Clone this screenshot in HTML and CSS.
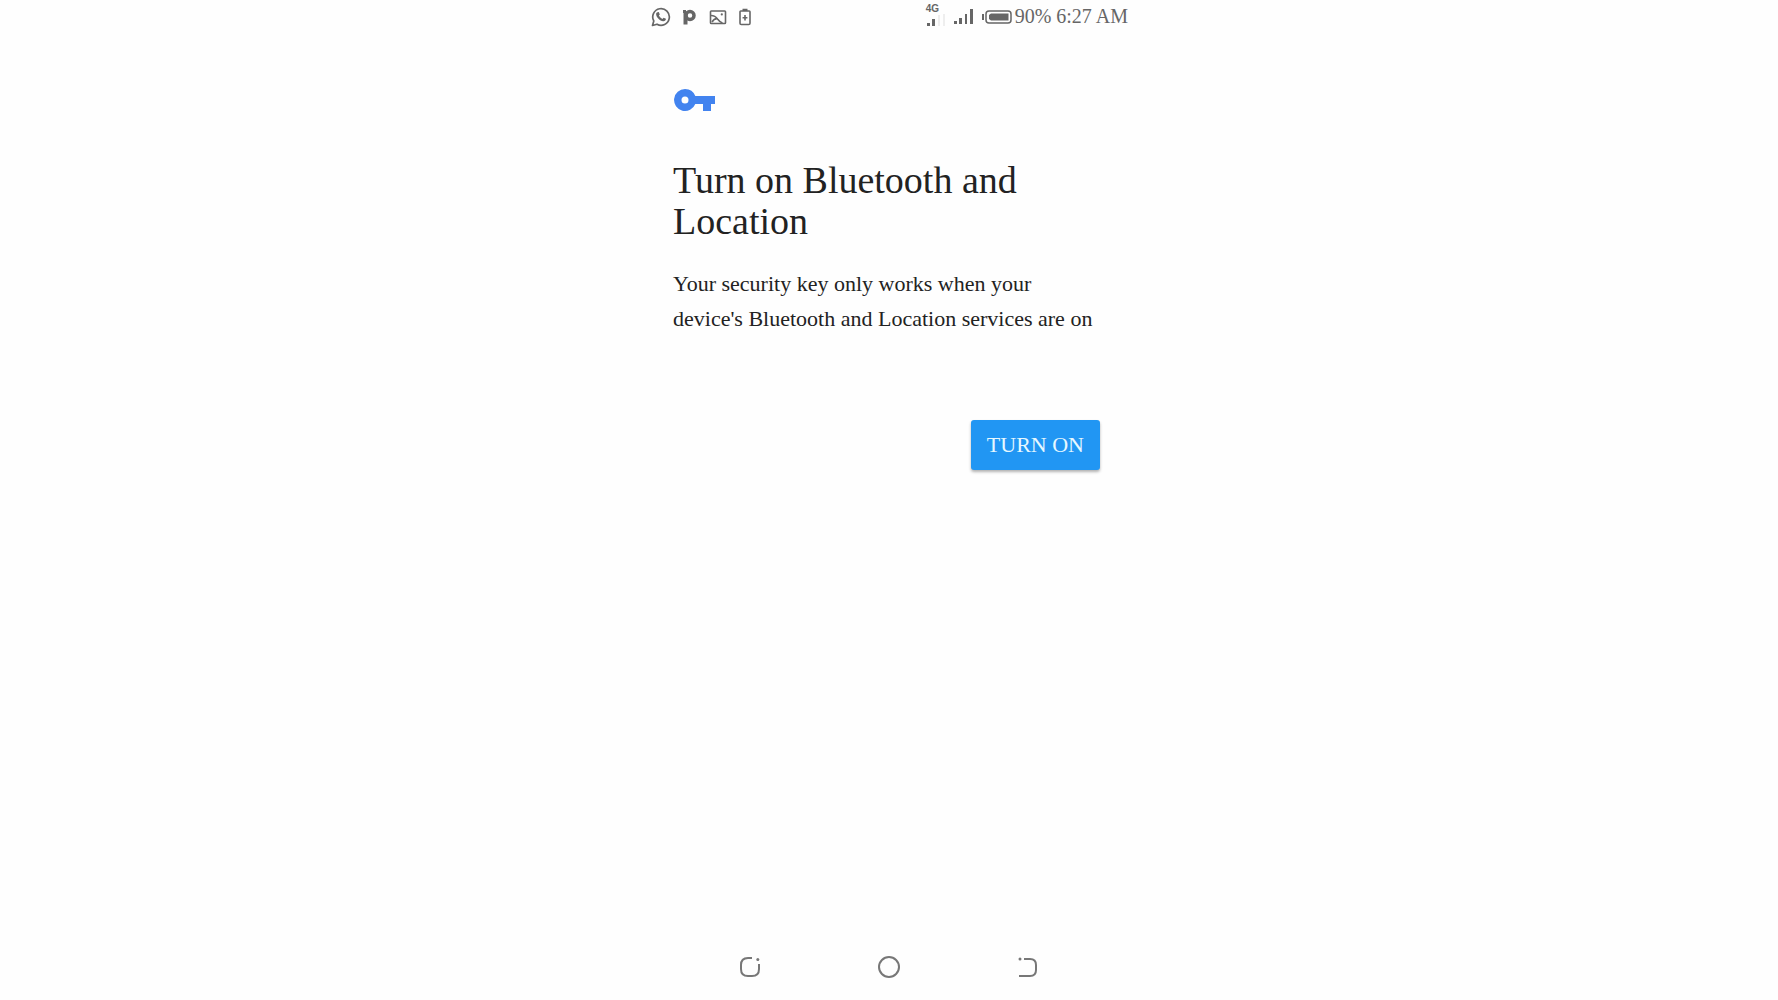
FILE: index.html
```html
<!DOCTYPE html>
<html lang="en">
<head>
<meta charset="utf-8">
<meta name="viewport" content="width=device-width, initial-scale=1">
<title>Turn on Bluetooth and Location</title>
<link rel="stylesheet" href="styles.css">
</head>
<body>
<div class="phone">
  <header class="status">
    <div class="notifications">
      <svg width="20" height="20" viewBox="0 0 20 20" fill="none" stroke="currentColor" aria-label="WhatsApp"><path d="M1.500 18.500 2.800 14a8.300 8.300 0 1 1 3.200 3.200Z" stroke-width="1.700" stroke-linejoin="round"/><path d="M6.500 5.200 7.800 5l1 2.400-.9 1.200c.8 1.500 2 2.600 3.500 3.300l1.200-1.200 2.300 1.100c.1 1.500-1.100 2.600-2.700 2.500-3.400-.4-6.800-3.700-7.100-7-.1-.9.500-1.700 1.400-2.100Z" fill="currentColor" stroke="none"/></svg>
      <svg width="16" height="20" viewBox="0 0 16 20" fill="none" stroke="currentColor" aria-label="P"><path d="M3.500 17.500V4.500" stroke-width="4"/><path d="M1 4.500h3" stroke-width="3"/><circle cx="8" cy="8.500" r="4" stroke-width="3.500"/></svg>
      <svg width="18" height="20" viewBox="0 0 18 20" fill="none" stroke="currentColor" stroke-width="1.600" aria-label="Image"><rect x="1.500" y="4" width="15" height="12.500" rx=".8"/><path d="M2 8.500c4 0 5.200 1.500 6.500 3.500 1.500 2 3 3.500 5 4M3 15c1.500-2.600 3-3.600 5.200-3.400"/><circle cx="12.800" cy="7.400" r="1.100" fill="currentColor" stroke="none"/></svg>
      <svg width="14" height="20" viewBox="0 0 14 20" fill="none" stroke="currentColor" stroke-width="1.600" aria-label="Battery saver"><path d="M2 4.800Q2 4 2.800 4h8.400q.8 0 .8.800v11.400q0 1.300-1.300 1.300H3.300Q2 17.500 2 16.200ZM4.500 2.500h5M7 8v5.500M4.600 10.700h4.800"/></svg>
    </div>
    <div class="system">
      <div class="network"><span class="network-label">4G</span>
        <svg width="20" height="16" viewBox="0 0 20 16"><path fill="currentColor" d="M1 9h3v3H1ZM6 5h3v7H6Z"/><path fill="#eee" d="M12 1h2v11h-2ZM17 0h2v12h-2Z"/></svg>
      </div>
      <svg class="signal" width="22" height="18" viewBox="0 0 22 18" fill="currentColor" aria-label="Signal"><path d="M1 13h3v3H1ZM6 10h3v6H6ZM12 6h2v10h-2ZM17 1h3v15h-3Z"/></svg>
      <svg class="battery" width="30" height="16" viewBox="0 0 30 16" fill="none" stroke="currentColor" aria-label="Battery"><path d="M1 5v6" stroke-width="2"/><rect x="4" y="2" width="25" height="12" rx="3" stroke-width="1.500"/><path fill="currentColor" stroke="none" d="M9 4.500h17.500v7H9L7 10V6Z"/></svg>
      <span class="readings">90% <time>6:27 AM</time></span>
    </div>
  </header>
  <main class="content">
    <svg class="key" width="42" height="24" viewBox="0 0 42 24" aria-hidden="true"><path fill="#4283ef" fill-rule="evenodd" d="M12 1a11 11 0 1 0 10.300 15H30v7h8v-7h4V8H22.300A11 11 0 0 0 12 1Zm0 7.500a3.500 3.500 0 1 1 0 7 3.500 3.500 0 0 1 0-7Z"/></svg>
    <h1 class="title">Turn on Bluetooth and Location</h1>
    <p class="message">Your security key only works when your<br>device's Bluetooth and Location services are on</p>
    <button class="turn-on" type="button">TURN ON</button>
  </main>
  <nav class="navigation" aria-label="System navigation">
    <button class="nav-button" type="button" aria-label="Recent apps"><svg width="24" height="24" viewBox="0 0 24 24" fill="none" stroke="currentColor" stroke-width="2"><path d="M14 3H10Q3 3 3 10v4q0 7 7 7h4q7 0 7-7V9"/><circle cx="19.800" cy="4.500" r="1.500" fill="currentColor" stroke="none"/></svg></button>
    <button class="nav-button" type="button" aria-label="Home"><svg width="24" height="24" viewBox="0 0 24 24" fill="none" stroke="currentColor" stroke-width="2"><circle cx="12" cy="12" r="10"/></svg></button>
    <button class="nav-button" type="button" aria-label="Back"><svg width="24" height="24" viewBox="0 0 24 24" fill="none" stroke="currentColor" stroke-width="2"><path d="M8 4h6q6 0 6 6v5q0 6-6 6H3"/><circle cx="4" cy="4" r="1.500" fill="currentColor" stroke="none"/></svg></button>
  </nav>
</div>
</body>
</html>
```
FILE: styles.css
```css
* {
  box-sizing: border-box;
}

body {
  margin: 0;
  background: #fefefe;
  color: #222;
  font-family: "Liberation Serif", "Times New Roman", serif;
}

svg {
  display: block;
  flex: none;
}

.phone {
  display: flex;
  flex-direction: column;
  width: 100%;
  max-width: 500px;
  min-height: 100vh;
  margin: 0 auto;
}

.status {
  display: flex;
  justify-content: space-between;
  align-items: center;
  height: 33px;
  padding: 0 11px 0 12px;
  color: #666;
  font-size: 20px;
}

.notifications {
  display: flex;
  align-items: center;
  gap: 11px;
}

.system {
  display: flex;
  align-items: center;
  gap: 3px;
  white-space: nowrap;
}

.network {
  display: flex;
  flex-direction: column;
}

.network-label {
  font: bold 10px/10px "Liberation Sans", Arial, sans-serif;
}

.signal {
  margin: 0 4px;
}

.content {
  display: flex;
  flex: 1;
  flex-direction: column;
  padding: 55px 32px 40px 34px;
}

.title {
  margin: 48px 0 24px;
  font-size: 38px;
  font-weight: 400;
  line-height: 41px;
}

.message {
  margin: 0;
  font-size: 22px;
  line-height: 35px;
}

.turn-on {
  align-self: flex-end;
  height: 50px;
  margin: 84px 7px 0 0;
  padding: 0 16px;
  border: 0;
  border-radius: 3px;
  background: #2196f3;
  box-shadow: 0 2px 3px rgba(0, 0, 0, 0.3);
  color: #e6f8ff;
  font: 22px "Liberation Serif", "Times New Roman", serif;
}

.navigation {
  display: flex;
  justify-content: center;
  gap: 91px;
  padding-bottom: 9px;
}

.nav-button {
  display: grid;
  place-items: center;
  width: 48px;
  height: 48px;
  padding: 0;
  border: 0;
  background: none;
  color: #777;
}
```
